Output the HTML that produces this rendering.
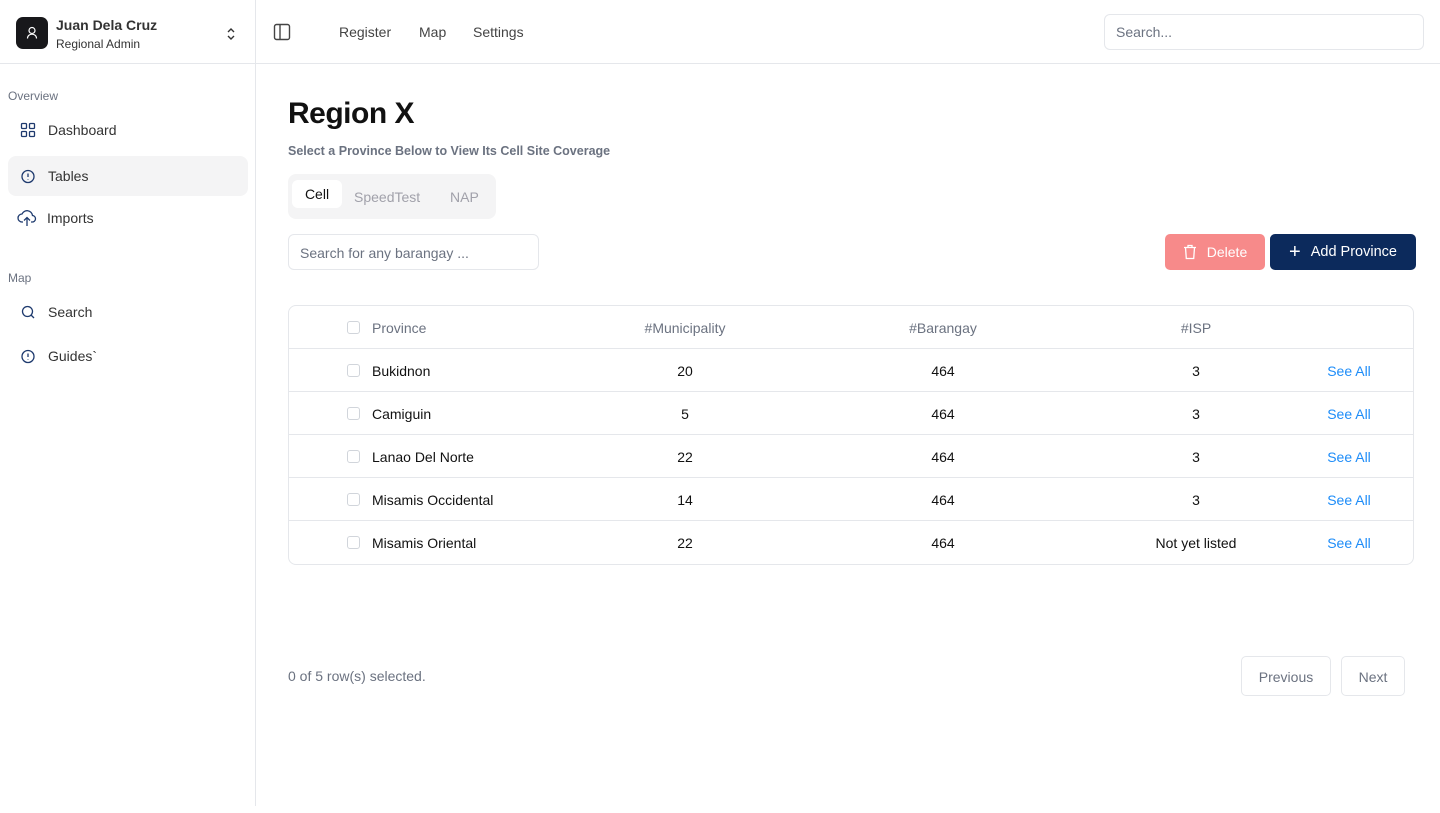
<!DOCTYPE html>
<html><head><meta charset="utf-8"><style>
*{box-sizing:border-box;margin:0;padding:0}
body{width:1440px;height:813px;font-family:"Liberation Sans",Arial,sans-serif;color:#111;background:#fff;position:relative;overflow:hidden;font-size:14px}
.side{position:absolute;left:0;top:0;width:256px;height:806px;border-right:1px solid #e5e7eb}
.top{position:absolute;left:0;top:63px;width:1440px;height:1px;background:#e5e7eb}
.abs{position:absolute}
.lbl{font-size:12px;color:#6b7280}
.nav{position:absolute;left:8px;width:240px;height:40px;border-radius:8px;display:flex;align-items:center;font-size:14px;color:#333}
.nav svg{margin-left:12px;margin-right:12px}
.row{position:absolute;left:289px;width:1124px;height:43px;border-top:1px solid #e5e7eb}
.row span{position:absolute;top:14px;font-size:14px}
.c{transform:translateX(-50%)}
.cb{position:absolute;left:58px;top:15px;width:13px;height:13px;border:1px solid #d1d5db;border-radius:3px}
.see{color:#1d8cf8}
</style></head><body>
<div class="side"></div>
<div class="top"></div>
<div class="abs" style="left:16px;top:17px;width:32px;height:32px;background:#18181b;border-radius:7px">
<svg width="32" height="32" viewBox="0 0 32 32" fill="none" stroke="#fff" stroke-width="1.2"><circle cx="16" cy="13.5" r="3"/><path d="M11.5 21.5c0-2.7 2-4.3 4.5-4.3s4.5 1.6 4.5 4.3"/></svg></div>
<div class="abs" style="left:56px;top:17px;font-size:14px;font-weight:bold;color:#333">Juan Dela Cruz</div>
<div class="abs" style="left:56px;top:37px;font-size:12px;color:#333">Regional Admin</div>
<svg class="abs" style="left:225px;top:26px" width="12" height="16" viewBox="0 0 12 16" fill="none" stroke="#333" stroke-width="1.4"><path d="M3 6l3-3 3 3M3 10l3 3 3-3"/></svg>
<div class="abs lbl" style="left:8px;top:89px">Overview</div>
<div class="nav" style="top:110px"><svg width="16" height="16" viewBox="0 0 16 16" fill="none" stroke="#1e3a6e" stroke-width="1.3"><rect x="1.5" y="1.5" width="5" height="5" rx="1"/><rect x="9.5" y="1.5" width="5" height="5" rx="1"/><rect x="1.5" y="9.5" width="5" height="5" rx="1"/><rect x="9.5" y="9.5" width="5" height="5" rx="1"/></svg>Dashboard</div>
<div class="nav" style="top:156px;background:#f4f4f5"><svg width="16" height="16" viewBox="0 0 16 16" fill="none" stroke="#1e3a6e" stroke-width="1.3"><circle cx="8" cy="8.5" r="6"/><path d="M8 5.5v3.5M8 11v.5"/></svg>Tables</div>
<div class="nav" style="top:198px"><svg style="margin-left:9px;margin-right:10px" width="20" height="18" viewBox="0 0 20 18" fill="none" stroke="#1e3a6e" stroke-width="1.3"><path d="M6 13H5a4 4 0 0 1 0-8 5.5 5.5 0 0 1 10.5 1.5A3 3 0 0 1 15 13h-1"/><path d="M10 17V9M7 11.5l3-3 3 3"/></svg>Imports</div>
<div class="abs lbl" style="left:8px;top:271px">Map</div>
<div class="nav" style="top:292px"><svg width="16" height="16" viewBox="0 0 16 16" fill="none" stroke="#1e3a6e" stroke-width="1.3"><circle cx="7.5" cy="7.5" r="5"/><path d="M11 11l3 3"/></svg>Search</div>
<div class="nav" style="top:336px"><svg width="16" height="16" viewBox="0 0 16 16" fill="none" stroke="#1e3a6e" stroke-width="1.3"><circle cx="8" cy="8.5" r="6"/><path d="M8 5.5v3.5M8 11v.5"/></svg>Guides`</div>
<svg class="abs" style="left:273px;top:23px" width="18" height="18" viewBox="0 0 18 18" fill="none" stroke="#444" stroke-width="1.4"><rect x="1.5" y="1.5" width="15" height="15" rx="2"/><path d="M7 1.5v15"/></svg>
<div class="abs" style="left:339px;top:24px;color:#444">Register</div>
<div class="abs" style="left:419px;top:24px;color:#444">Map</div>
<div class="abs" style="left:473px;top:24px;color:#444">Settings</div>
<div class="abs" style="left:1104px;top:14px;width:320px;height:36px;border:1px solid #e5e7eb;border-radius:6px;padding:9px 11px;color:#6b7280">Search...</div>
<div class="abs" style="left:288px;top:97px;font-size:30px;font-weight:bold;letter-spacing:-0.5px">Region X</div>
<div class="abs" style="left:288px;top:144px;font-size:12.5px;font-weight:bold;color:#6b7280">Select a Province Below to View Its Cell Site Coverage</div>
<div class="abs" style="left:288px;top:174px;width:208px;height:45px;background:#f4f4f5;border-radius:8px"></div>
<div class="abs" style="left:292px;top:180px;width:50px;height:28px;background:#fff;border-radius:6px;text-align:center;padding-top:6px">Cell</div>
<div class="abs" style="left:354px;top:189px;color:#a1a1aa">SpeedTest</div>
<div class="abs" style="left:450px;top:189px;color:#a1a1aa">NAP</div>
<div class="abs" style="left:288px;top:234px;width:251px;height:36px;border:1px solid #e5e7eb;border-radius:6px;padding:10px 11px;color:#6b7280">Search for any barangay ...</div>
<div class="abs" style="left:1165px;top:234px;width:100px;height:36px;background:#f78a8a;border-radius:5px;color:#fff;display:flex;align-items:center;justify-content:center"><svg width="14" height="16" viewBox="0 0 14 16" fill="none" stroke="#fff" stroke-width="1.3" style="margin-right:10px"><path d="M1 3.5h12M5 3.5V1.5h4v2M2.5 3.5l.8 11h7.4l.8-11"/></svg>Delete</div>
<div class="abs" style="left:1270px;top:234px;width:146px;height:36px;background:#0c2a5c;border-radius:5px;color:#fff;display:flex;align-items:center;justify-content:center;font-size:14.5px"><span style="font-size:20px;margin-right:10px;font-weight:300">+</span>Add Province</div>
<div class="abs" style="left:288px;top:305px;width:1126px;height:260px;border:1px solid #e5e7eb;border-radius:8px"></div>
<div class="row" style="top:306px;border-top:none"><div class="cb"></div><span style="left:83px;color:#6b7280">Province</span><span class="c" style="left:396px;color:#6b7280">#Municipality</span><span class="c" style="left:654px;color:#6b7280">#Barangay</span><span class="c" style="left:907px;color:#6b7280">#ISP</span></div>
<div class="row" style="top:348px"><div class="cb"></div><span style="left:83px">Bukidnon</span><span class="c" style="left:396px">20</span><span class="c" style="left:654px">464</span><span class="c" style="left:907px">3</span><span class="c see" style="left:1060px">See All</span></div>
<div class="row" style="top:391px"><div class="cb"></div><span style="left:83px">Camiguin</span><span class="c" style="left:396px">5</span><span class="c" style="left:654px">464</span><span class="c" style="left:907px">3</span><span class="c see" style="left:1060px">See All</span></div>
<div class="row" style="top:434px"><div class="cb"></div><span style="left:83px">Lanao Del Norte</span><span class="c" style="left:396px">22</span><span class="c" style="left:654px">464</span><span class="c" style="left:907px">3</span><span class="c see" style="left:1060px">See All</span></div>
<div class="row" style="top:477px"><div class="cb"></div><span style="left:83px">Misamis Occidental</span><span class="c" style="left:396px">14</span><span class="c" style="left:654px">464</span><span class="c" style="left:907px">3</span><span class="c see" style="left:1060px">See All</span></div>
<div class="row" style="top:520px"><div class="cb"></div><span style="left:83px">Misamis Oriental</span><span class="c" style="left:396px">22</span><span class="c" style="left:654px">464</span><span class="c" style="left:907px">Not yet listed</span><span class="c see" style="left:1060px">See All</span></div>
<div class="abs" style="left:288px;top:668px;color:#6b7280">0 of 5 row(s) selected.</div>
<div class="abs" style="left:1241px;top:656px;width:90px;height:40px;border:1px solid #e5e7eb;border-radius:5px;text-align:center;padding-top:12px;color:#6b7280">Previous</div>
<div class="abs" style="left:1341px;top:656px;width:64px;height:40px;border:1px solid #e5e7eb;border-radius:5px;text-align:center;padding-top:12px;color:#6b7280">Next</div>
</body></html>
